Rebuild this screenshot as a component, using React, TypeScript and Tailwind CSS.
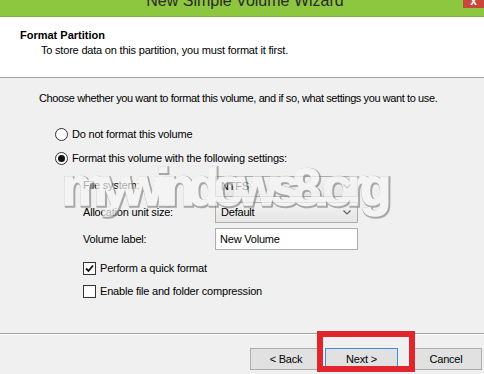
import React from 'react';

const Radio: React.FC<{ checked?: boolean }> = ({ checked }) => (
  <span className="w-[13px] h-[13px] rounded-full border border-[#333] bg-white flex items-center justify-center">
    {checked && <span className="w-[7px] h-[7px] rounded-full bg-[#111]" />}
  </span>
);

const Check: React.FC<{ checked?: boolean }> = ({ checked }) => (
  <span className="w-[13px] h-[13px] border border-[#333] bg-white flex items-center justify-center">
    {checked && (
      <svg width="9" height="9" viewBox="0 0 9 9">
        <path d="M1 4.5 L3.5 7 L8 1.5" fill="none" stroke="#111" strokeWidth="1.8" />
      </svg>
    )}
  </span>
);

const Combo: React.FC<{ value: string }> = ({ value }) => (
  <div className="w-[143px] h-[21px] border border-[#acacac] bg-gradient-to-b from-[#f2f2f2] to-[#e5e5e5] flex items-center justify-between pl-[5px] pr-[6px]">
    <span>{value}</span>
    <svg width="8" height="5" viewBox="0 0 8 5">
      <path d="M0.5 0.5 L4 4 L7.5 0.5" fill="none" stroke="#606060" strokeWidth="1.2" />
    </svg>
  </div>
);

const Btn: React.FC<{ label: string; w: string; focused?: boolean }> = ({ label, w, focused }) => (
  <div
    className={`${w} h-[22px] flex items-center justify-center border bg-[#e1e1e1] ${
      focused ? 'border-[#3c8fd8]' : 'border-[#adadad]'
    }`}
  >
    {label}
  </div>
);

export default function App() {
  return (
    <div className="w-[484px] h-[374px] relative overflow-hidden flex flex-col bg-[#f0f0f0] text-[11px] tracking-[-0.2px] text-black [font-family:'Liberation_Sans',Arial,sans-serif]">
      {/* title bar, cut off at the top */}
      <div className="h-[17px] relative overflow-hidden bg-[#8dc63f] border-b border-[#7db338] flex justify-center pl-[6px]">
        <span className="text-[16px] leading-none mt-[-7px] text-[#2a2a2a] tracking-normal">New Simple Volume Wizard</span>
        <div className="absolute right-0 top-0 w-[21px] h-[8px] bg-[#c9463d] overflow-hidden flex justify-center">
          <span className="text-white text-[12px] leading-none mt-[-5px] font-bold">x</span>
        </div>
      </div>

      {/* header */}
      <div className="h-[61px] bg-white border-b border-[#a0a0a0] pt-[12px] pl-[20px]">
        <div className="font-bold leading-[13px] tracking-normal">Format Partition</div>
        <div className="leading-[13px] mt-[2px] pl-[21px]">To store data on this partition, you must format it first.</div>
      </div>

      {/* body */}
      <div className="flex-1 pl-[39px] pt-[14px] border-b border-[#a0a0a0]">
        <p className="leading-[13px] tracking-[-0.4px]">
          Choose whether you want to format this volume, and if so, what settings you want to use.
        </p>
        <div className="ml-[16px] mt-[21px] h-[16px] flex items-center gap-[4px]">
          <Radio />
          <span>Do not format this volume</span>
        </div>
        <div className="ml-[16px] mt-[8px] h-[16px] flex items-center gap-[4px]">
          <Radio checked />
          <span>Format this volume with the following settings:</span>
        </div>
        <div className="ml-[44px] mt-[10px] grid grid-cols-[132px_143px] gap-y-[5px]">
          <span className="self-center mt-[-3px]">File system:</span>
          <Combo value="NTFS" />
          <span className="self-center">Allocation unit size:</span>
          <Combo value="Default" />
          <span className="self-center">Volume label:</span>
          <div className="w-[143px] h-[22px] border border-[#abadb3] bg-white pl-[4px] pt-[2px]">New Volume</div>
        </div>
        <div className="ml-[44px] mt-[10px] h-[16px] flex items-center gap-[4px]">
          <Check checked />
          <span>Perform a quick format</span>
        </div>
        <div className="ml-[44px] mt-[7px] h-[16px] flex items-center gap-[4px]">
          <Check />
          <span>Enable file and folder compression</span>
        </div>
      </div>

      {/* footer */}
      <div className="h-[40px] border-t border-white pt-[13px] pr-[2px] flex justify-end">
        <Btn label="< Back" w="w-[72px]" />
        <div className="w-[3px]" />
        <Btn label="Next >" w="w-[73px]" focused />
        <div className="w-[12px]" />
        <Btn label="Cancel" w="w-[72px]" />
      </div>

      {/* watermark: gray outline layer under a thickened light layer */}
      <div
        aria-hidden
        className="absolute left-[62px] top-[162px] grid text-[51px] leading-none font-black tracking-[-6.5px] opacity-70 pointer-events-none"
      >
        <span className="relative col-start-1 row-start-1 text-[#8a8a8a] [-webkit-text-stroke:3.5px_#8a8a8a] translate-x-[1px] translate-y-[1px]">
          mywindows8.org
        </span>
        <span className="relative col-start-1 row-start-1 text-[#f6f6f6] [-webkit-text-stroke:1.5px_#f6f6f6]">
          mywindows8.org
        </span>
      </div>

      {/* highlight box */}
      <div className="absolute left-[317px] top-[331px] w-[98px] h-[41px] border-[6px] border-[#e1252d]" />
    </div>
  );
}
